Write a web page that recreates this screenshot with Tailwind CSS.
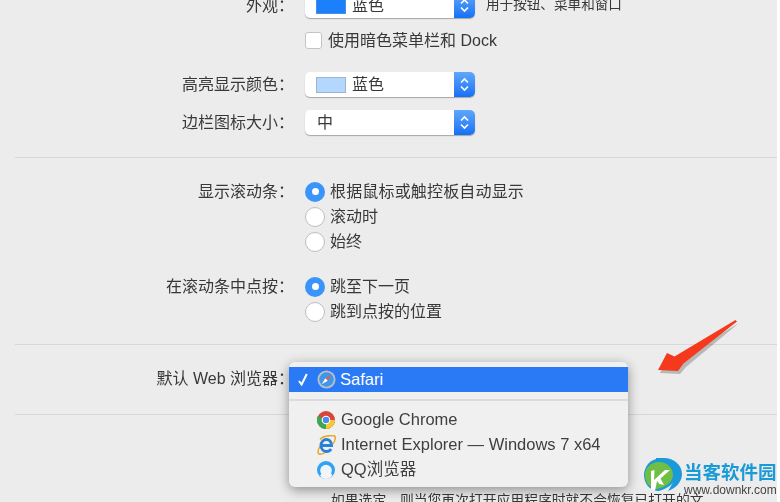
<!DOCTYPE html>
<html lang="zh-CN">
<head>
<meta charset="utf-8">
<script src="https://cdn.jsdelivr.net/npm/@tailwindcss/browser@4"></script>
</head>
<body class="bg-white">
<div class="relative w-[777px] h-[502px] overflow-hidden bg-[#ececec] text-[#383838] text-[16px] font-['Liberation_Sans','Noto_Sans_CJK_SC',sans-serif]">
  <div class="blur-[0.4px] -mt-[7px]">
    <div class="flex h-[25px] items-center">
      <div class="w-[294px] text-right">外观：</div>
      <div class="ml-[11px] w-[170px] h-[25px] flex items-center bg-white rounded-[5px] shadow-[0_1px_1px_rgba(0,0,0,0.3)]">
        <div class="ml-[11px] w-[30px] h-[16px] bg-[#1c7ffb] border border-[#4b8fe0]"></div>
        <div class="ml-[6px] flex-1">蓝色</div>
        <div class="w-[21px] h-full rounded-r-[5px] bg-gradient-to-b from-[#5fa6fb] to-[#1470f5] flex items-center justify-center">
          <svg width="11" height="17" viewBox="0 0 11 17" fill="none" stroke="#fff" stroke-width="1.6"><path d="M2 6.5 5.5 3 9 6.5M2 10.5 5.5 14 9 10.5"/></svg>
        </div>
      </div>
      <div class="ml-[11px] text-[13.6px]">用于按钮、菜单和窗口</div>
    </div>
    <div class="flex h-[25px] items-center mt-[10px] pl-[305px]">
      <div class="w-[17px] h-[17px] bg-white rounded-[3px] border border-[#c4c4c4]"></div>
      <div class="ml-[6px]">使用暗色菜单栏和 Dock</div>
    </div>
    <div class="flex h-[25px] items-center mt-[19px]">
      <div class="w-[294px] text-right">高亮显示颜色：</div>
      <div class="ml-[11px] w-[170px] h-[25px] flex items-center bg-white rounded-[5px] shadow-[0_1px_1px_rgba(0,0,0,0.3)]">
        <div class="ml-[11px] w-[30px] h-[16px] bg-[#b3d7ff] border border-[#9fb4cc]"></div>
        <div class="ml-[6px] flex-1">蓝色</div>
        <div class="w-[21px] h-full rounded-r-[5px] bg-gradient-to-b from-[#5fa6fb] to-[#1470f5] flex items-center justify-center">
          <svg width="11" height="17" viewBox="0 0 11 17" fill="none" stroke="#fff" stroke-width="1.6"><path d="M2 6.5 5.5 3 9 6.5M2 10.5 5.5 14 9 10.5"/></svg>
        </div>
      </div>
    </div>
    <div class="flex h-[25px] items-center mt-[13px]">
      <div class="w-[294px] text-right">边栏图标大小：</div>
      <div class="ml-[11px] w-[170px] h-[25px] flex items-center bg-white rounded-[5px] shadow-[0_1px_1px_rgba(0,0,0,0.3)]">
        <div class="ml-[12px] flex-1">中</div>
        <div class="w-[21px] h-full rounded-r-[5px] bg-gradient-to-b from-[#5fa6fb] to-[#1470f5] flex items-center justify-center">
          <svg width="11" height="17" viewBox="0 0 11 17" fill="none" stroke="#fff" stroke-width="1.6"><path d="M2 6.5 5.5 3 9 6.5M2 10.5 5.5 14 9 10.5"/></svg>
        </div>
      </div>
    </div>
    <div class="mt-[22px] ml-[15px] h-px bg-[#d8d8d8]"></div>

    <div class="flex h-[25px] items-center mt-[21px]">
      <div class="w-[294px] text-right">显示滚动条：</div>
      <div class="ml-[11px] w-[20px] h-[20px] rounded-full bg-[#3b94fb] flex items-center justify-center"><div class="w-[7px] h-[7px] rounded-full bg-white"></div></div>
      <div class="ml-[5px] tracking-[0.17px]">根据鼠标或触控板自动显示</div>
    </div>
    <div class="flex h-[25px] items-center pl-[305px]">
      <div class="w-[20px] h-[20px] rounded-full bg-white border border-[#bdbdbd]"></div>
      <div class="ml-[5px]">滚动时</div>
    </div>
    <div class="flex h-[25px] items-center pl-[305px]">
      <div class="w-[20px] h-[20px] rounded-full bg-white border border-[#bdbdbd]"></div>
      <div class="ml-[5px]">始终</div>
    </div>
    <div class="flex h-[25px] items-center mt-[20px]">
      <div class="w-[294px] text-right">在滚动条中点按：</div>
      <div class="ml-[11px] w-[20px] h-[20px] rounded-full bg-[#3b94fb] flex items-center justify-center"><div class="w-[7px] h-[7px] rounded-full bg-white"></div></div>
      <div class="ml-[5px]">跳至下一页</div>
    </div>
    <div class="flex h-[25px] items-center pl-[305px]">
      <div class="w-[20px] h-[20px] rounded-full bg-white border border-[#bdbdbd]"></div>
      <div class="ml-[5px]">跳到点按的位置</div>
    </div>
    <div class="mt-[20px] ml-[15px] h-px bg-[#d8d8d8]"></div>

    <div class="flex h-[25px] items-center mt-[21px]">
      <div class="w-[294px] text-right">默认 Web 浏览器：</div>
    </div>
    <div class="mt-[23px] ml-[15px] h-px bg-[#d8d8d8]"></div>
    <div class="mt-[74px] ml-[331px] h-[24px] leading-[24px] whitespace-nowrap text-[13.8px]">如果选定，则当您再次打开应用程序时就不会恢复已打开的文</div>
  </div>

  <!-- arrow -->
  <svg class="absolute left-[650px] top-[312px] blur-[0.5px]" width="95" height="70" viewBox="0 0 95 70">
    <path d="M8 58 17 41 25 45 87 8 34 52 28 59Z" fill="#000" opacity=".22" transform="translate(2 3)"/>
    <path d="M8 58 17 41 24.5 44.5 85.5 8 87 9.5 33.5 51.5 28 59Z" fill="#f4391c"/>
  </svg>

  <!-- popup menu -->
  <div class="absolute left-[289px] top-[362px] w-[339px] h-[125px] rounded-[6px] bg-[#f0f0f0] shadow-[0_3px_12px_rgba(0,0,0,0.4)] text-[16.5px] text-[#3f3f3f] blur-[0.35px]">
    <div class="mt-[5px] h-[25px] bg-[#2a7af5] text-white flex items-center">
      <svg class="ml-[9px] mr-[9px]" width="10" height="13" viewBox="0 0 10 13" fill="none" stroke="#fff" stroke-width="2"><path d="M1 8 3.6 11.5 8.8 1"/></svg>
      <svg width="19" height="19" viewBox="0 0 20 20"><circle cx="10" cy="10" r="9.5" fill="#b9bfc6"/><circle cx="10" cy="10" r="7.6" fill="#3f97e8"/><path d="M15 5 8.7 8.7 11.3 11.3Z" fill="#ef5a4a"/><path d="M5 15 8.7 8.7 11.3 11.3Z" fill="#fff"/></svg>
      <span class="ml-[4px]">Safari</span>
    </div>
    <div class="mt-[7px] h-[2px] bg-[#dcdcdc]"></div>
    <div class="mt-[6px] h-[25px] flex items-center pl-[28px]">
      <svg width="18" height="18" viewBox="0 0 18 18"><circle cx="9" cy="9" r="9" fill="#d9453a"/><path d="M9 9 1.2 13.5A9 9 0 0 1 .9 5Z" fill="#3ba853"/><path d="M9 9H18A9 9 0 0 1 9 18 9 9 0 0 1 1.2 13.5Z" fill="#3ba853"/><path d="M9 9H18A9 9 0 0 1 9 18Z" fill="#f7c92e"/><circle cx="9" cy="9" r="4.3" fill="#fff"/><circle cx="9" cy="9" r="3.2" fill="#4a8cf0"/></svg>
      <span class="ml-[6px]">Google Chrome</span>
    </div>
    <div class="h-[25px] flex items-center pl-[28px]">
      <svg width="19" height="20" viewBox="0 0 19 20" fill="none">
        <path d="M3 4.5C6 .5 14 .5 17.5 .8 18.8 2.5 18 6 16 9" stroke="#e9a92c" stroke-width="1.5"/>
        <path d="M2.8 11.5C1 15 .5 18 2 19 4.5 19.5 8 18 11 15.5" stroke="#e9a92c" stroke-width="1.6"/>
        <path d="M4.5 10.5H14.5C14.5 6.5 12 4.5 9.5 4.5 6.5 4.5 4 7 4 10.5 4 14 6.5 16.5 9.5 16.5 11.5 16.5 13 15.5 14 14" stroke="#2a80d6" stroke-width="3"/>
      </svg>
      <span class="ml-[5px]">Internet Explorer — Windows 7 x64</span>
    </div>
    <div class="h-[25px] flex items-center pl-[28px]">
      <svg width="18" height="18" viewBox="0 0 18 18"><circle cx="9" cy="9" r="9" fill="#2fa3f2"/><circle cx="9" cy="9.5" r="5.8" fill="#eef6fc"/><path d="M3 14.5C5 11.5 7.5 11.5 9 12.5 11.5 10.5 14 11.5 15.5 14.5 13.5 17 11.5 18 9 18S4.5 17 3 14.5Z" fill="#f3f5f7"/></svg>
      <span class="ml-[6px]">QQ浏览器</span>
    </div>
  </div>

  <!-- watermark -->
  <div class="absolute left-[644px] top-[458px] flex items-start blur-[0.3px]">
    <svg width="38" height="34" viewBox="0 0 38 34">
      <path d="M12 0H20C30 0 38 7 38 16 38 24 32 30 24 33 28 27 31 21 30 15 29 9 22 5 12 5Z" fill="#1a9ad8"/>
      <path d="M14 1C24 1 32 8 32 16 32 24 25 30 15 33 6 33 0 26 0 17 0 9 6 1 14 1Z" fill="#1a9ad8"/>
      <path d="M15 4C23 4 29 10 29 17 29 24 22 29 13 31 5 30 1 24 1 17 1 10 7 4 15 4Z" fill="#6fbf45"/>
      <path d="M7 13 10.5 12 10 22 21 12 26 12 16.5 20.5 20 27 15.5 26 13 23 11 33 7 31Z" fill="#fff"/>
    </svg>
    <div class="ml-[2px] mt-[3px]">
      <div class="text-[#1a9bd8] text-[18.5px] leading-[24px] font-bold whitespace-nowrap">当客软件园</div>
      <div class="text-[#444] text-[12px] leading-[13px] -mt-[1px] whitespace-nowrap">www.downkr.com</div>
    </div>
  </div>
</div>
</body>
</html>
